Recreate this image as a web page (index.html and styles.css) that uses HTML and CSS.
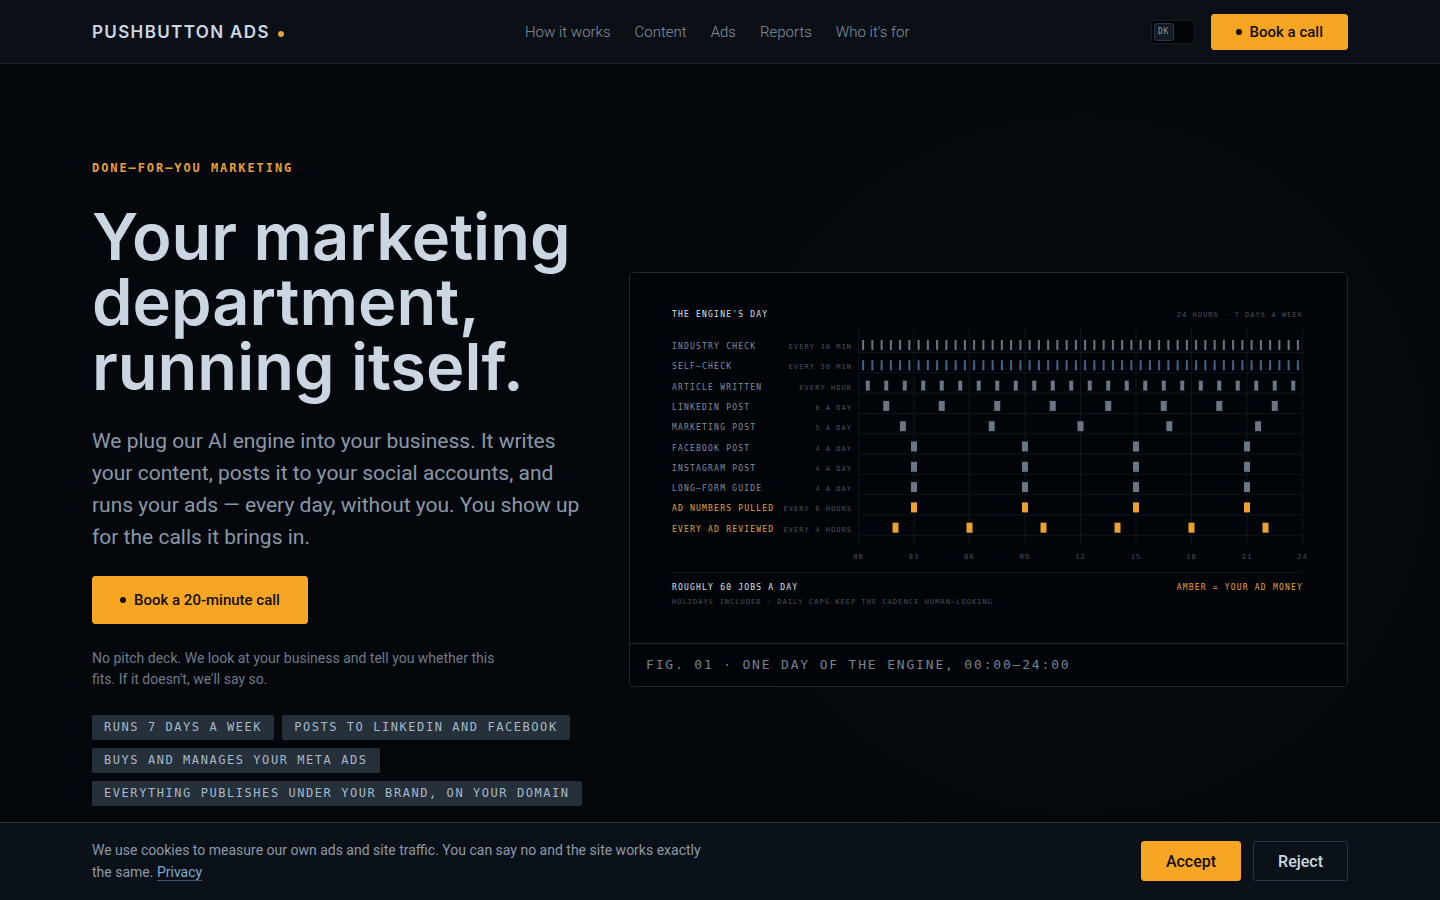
FILE: index.html
```
<!DOCTYPE html>
<html lang="en">
<head>
<meta charset="UTF-8">
<meta name="viewport" content="width=device-width, initial-scale=1.0">
<title>Pushbutton Ads</title>
<link rel="stylesheet" href="styles.css">
</head>
<body>

<header class="site-header">
    <div class="wrap header-inner">
        <a class="logo" href="#">PUSHBUTTON ADS<span class="logo-dot"></span></a>
        <nav class="nav">
            <a href="#how">How it works</a>
            <a href="#content">Content</a>
            <a href="#ads">Ads</a>
            <a href="#reports">Reports</a>
            <a href="#who">Who it's for</a>
        </nav>
        <div class="header-actions">
            <button class="theme-toggle" type="button" aria-label="Switch theme"><span>DK</span></button>
            <a class="btn btn-small" href="#call"><span class="dot"></span>Book a call</a>
        </div>
    </div>
</header>

<main class="hero">
    <div class="wrap hero-grid">
        <div class="hero-copy">
            <p class="eyebrow">DONE–FOR–YOU MARKETING</p>
            <h1>Your marketing department, running itself.</h1>
            <p class="lead">We plug our AI engine into your business. It writes your content, posts it to your social accounts, and runs your ads — every day, without you. You show up for the calls it brings in.</p>
            <a class="btn btn-large" href="#call"><span class="dot"></span>Book a 20-minute call</a>
            <p class="note">No pitch deck. We look at your business and tell you whether this fits. If it doesn't, we'll say so.</p>
            <ul class="chips">
                <li>RUNS 7 DAYS A WEEK</li>
                <li>POSTS TO LINKEDIN AND FACEBOOK</li>
                <li>BUYS AND MANAGES YOUR META ADS</li>
                <li>EVERYTHING PUBLISHES UNDER YOUR BRAND, ON YOUR DOMAIN</li>
            </ul>
        </div>

        <figure class="figure">
            <svg id="chart" class="chart" viewBox="0 0 717 370" role="img" aria-label="The engine's day">
                <text class="title" x="42" y="44">THE ENGINE'S DAY</text>
                <text class="sub end" x="673" y="44">24 HOURS · 7 DAYS A WEEK</text>
                <g id="grid"></g>
                <g id="rows"></g>
                <line class="rule" x1="42" y1="299.5" x2="672" y2="299.5"/>
                <text class="title" x="42" y="317">ROUGHLY 60 JOBS A DAY</text>
                <text class="sub" x="42" y="331">HOLIDAYS INCLUDED · DAILY CAPS KEEP THE CADENCE HUMAN–LOOKING</text>
                <text class="amber end" x="673" y="317">AMBER = YOUR AD MONEY</text>
            </svg>
            <figcaption>FIG. 01 · ONE DAY OF THE ENGINE, 00:00–24:00</figcaption>
        </figure>
    </div>
</main>

<section class="cookies" aria-label="Cookies">
    <div class="wrap cookies-inner">
        <p>We use cookies to measure our own ads and site traffic. You can say no and the site works exactly the same. <a href="#privacy">Privacy</a></p>
        <div class="cookie-actions">
            <button class="btn" type="button">Accept</button>
            <button class="btn btn-outline" type="button">Reject</button>
        </div>
    </div>
</section>

<script src="chart.js"></script>
</body>
</html>
```

FILE: styles.css
```
* {
    box-sizing: border-box;
}
body {
    margin: 0;
    min-height: 100vh;
    background: #04070b;
    color: #ccd6e2;
    font-family: Roboto, "Liberation Sans", sans-serif;
    font-size: 15px;
}
a {
    color: inherit;
    text-decoration: none;
}
.wrap {
    max-width: 1320px;
    margin: 0 auto;
    padding: 0 32px;
}

/* header */
.site-header {
    background: #0b1016;
    border-bottom: 1px solid #1b232d;
}
.header-inner {
    display: flex;
    align-items: center;
    justify-content: space-between;
    height: 63px;
}
.logo {
    display: flex;
    align-items: center;
    gap: 8px;
    font-family: Inter, sans-serif;
    font-size: 17px;
    font-weight: 600;
    letter-spacing: 0.08em;
}
.logo-dot {
    width: 6px;
    height: 6px;
    margin-top: 5px;
    border-radius: 50%;
    background: #e0a040;
}
.nav {
    display: flex;
    gap: 24px;
    color: #8792a0;
    font-weight: 300;
}
.header-actions {
    display: flex;
    align-items: center;
    gap: 16px;
}
.theme-toggle {
    width: 44px;
    height: 24px;
    padding: 2px;
    display: flex;
    background: #020407;
    border: 1px solid #151c24;
    border-radius: 2px;
}
.theme-toggle span {
    width: 20px;
    height: 18px;
    border: 1px solid #2b3642;
    border-radius: 2px;
    background: #141b23;
    color: #909ba8;
    font: 8px/15px "DejaVu Sans Mono", monospace;
    letter-spacing: 0.1em;
    text-align: center;
}
.btn {
    display: inline-flex;
    align-items: center;
    justify-content: center;
    height: 40px;
    padding: 0 24px;
    background: #f6a623;
    color: #140c02;
    border: 1px solid #f6a623;
    border-radius: 3px;
    font-family: inherit;
    font-size: 16px;
    font-weight: 500;
    cursor: pointer;
}
.btn-small {
    height: 36px;
    font-size: 15px;
}
.btn-large {
    height: 48px;
    padding: 0 27px;
    font-size: 15px;
}
.btn-outline {
    background: transparent;
    color: #ccd6e2;
    border-color: #2a333e;
}
.dot {
    width: 6px;
    height: 6px;
    margin-right: 8px;
    border-radius: 50%;
    background: #140c02;
}

/* hero */
.hero {
    background: radial-gradient(circle at 1080px 400px, #070b11 0, #04070b 420px);
}
.hero-grid {
    display: grid;
    grid-template-columns: 493fr 719fr;
    gap: 44px;
    align-items: center;
    padding-top: 88px;
    padding-bottom: 96px;
}
.eyebrow {
    margin: 0 0 20px;
    color: #e5a03a;
    font: bold 12px/32px "DejaVu Sans Mono", monospace;
    letter-spacing: 0.16em;
}
h1 {
    margin: 0 0 26px;
    font-family: Inter, "Liberation Sans", sans-serif;
    font-size: 65px;
    font-weight: 600;
    line-height: 65px;
}
.lead {
    margin: 0 0 23px;
    color: #8b98a8;
    font-size: 21px;
    line-height: 32px;
}
.note {
    max-width: 424px;
    margin: 24px 0 25px;
    color: #6f7b89;
    font-size: 14px;
    line-height: 21px;
}
.chips {
    display: flex;
    flex-wrap: wrap;
    gap: 8px;
    margin: 0;
    padding: 0;
    list-style: none;
}
.chips li {
    padding: 0 12px;
    background: #25303b;
    color: #a9b8c8;
    border-radius: 2px;
    font: 12px/25px "DejaVu Sans Mono", monospace;
    letter-spacing: 0.13em;
}

/* figure */
.figure {
    margin: 0;
    background: #010408;
    border: 1px solid #1e262f;
    border-radius: 5px;
}
.chart {
    display: block;
    width: 100%;
}
.chart text {
    font-family: "DejaVu Sans Mono", monospace;
    font-size: 8px;
    letter-spacing: 0.15em;
    fill: #828d9a;
}
.chart .title {
    fill: #dbe2ea;
}
.chart .sub {
    font-size: 7px;
    fill: #4a535e;
}
.chart .amber {
    fill: #e5a03a;
}
.chart .end {
    text-anchor: end;
}
.chart .middle {
    text-anchor: middle;
}
.chart .rule {
    stroke: #10161d;
}
.chart .tick {
    fill: #6b7684;
}
.chart .tick.blue {
    fill: #46648a;
}
.chart .tick.ad {
    fill: #eda22e;
}
figcaption {
    padding: 0 16px;
    border-top: 1px solid #1e262f;
    color: #77828f;
    font: 13px/42px "DejaVu Sans Mono", monospace;
    letter-spacing: 0.14em;
}

/* cookie bar */
.cookies {
    position: fixed;
    left: 0;
    right: 0;
    bottom: 0;
    background: #0b1118;
    border-top: 1px solid #26323e;
}
.cookies-inner {
    display: flex;
    align-items: center;
    justify-content: space-between;
    padding-top: 16px;
    padding-bottom: 17px;
}
.cookies p {
    max-width: 624px;
    margin: 0;
    color: #8d99a7;
    font-size: 14px;
    line-height: 22px;
}
.cookies p a {
    color: #7fa8d4;
    border-bottom: 1px solid #3c5672;
}
.cookie-actions {
    display: flex;
    gap: 12px;
}
```

FILE: chart.js
```
// label, how often, runs per day, tick width, tick colour
var rows = [
    ['INDUSTRY CHECK', 'EVERY 30 MIN', 48, 2, ''],
    ['SELF–CHECK', 'EVERY 30 MIN', 48, 2, 'blue'],
    ['ARTICLE WRITTEN', 'EVERY HOUR', 24, 4, ''],
    ['LINKEDIN POST', '8 A DAY', 8, 6, ''],
    ['MARKETING POST', '5 A DAY', 5, 6, ''],
    ['FACEBOOK POST', '4 A DAY', 4, 6, ''],
    ['INSTAGRAM POST', '4 A DAY', 4, 6, ''],
    ['LONG–FORM GUIDE', '4 A DAY', 4, 6, ''],
    ['AD NUMBERS PULLED', 'EVERY 6 HOURS', 4, 6, 'ad'],
    ['EVERY AD REVIEWED', 'EVERY 4 HOURS', 6, 6, 'ad']
];
var left = 228.5;
var width = 444;
var rowTop = 67;
var rowStep = 20.3;

var grid = '';
for (var h = 0; h <= 24; h += 3) {
    var x = left + h * width / 24;
    grid += '<line class="rule" x1="' + x + '" y1="56" x2="' + x + '" y2="272"/>';
    grid += '<text class="sub middle" x="' + x + '" y="286">' + String(h).padStart(2, '0') + '</text>';
}
document.getElementById('grid').innerHTML = grid;

document.getElementById('rows').innerHTML = rows.map(function(row, i) {
    var y = rowTop + i * rowStep;
    var out = '<text class="' + (row[4] === 'ad' ? 'amber' : '') + '" x="42" y="' + (y + 9) + '">' + row[0] + '</text>' +
        '<text class="sub end" x="222" y="' + (y + 9) + '">' + row[1] + '</text>' +
        '<line class="rule" x1="' + left + '" y1="' + (y + 12.5) + '" x2="' + (left + width) + '" y2="' + (y + 12.5) + '"/>';
    for (var n = 0; n < row[2]; n++) {
        var cx = left + (n + 0.5) * width / row[2];
        out += '<rect class="tick ' + row[4] + '" x="' + (cx - row[3] / 2) + '" y="' + y + '" width="' + row[3] + '" height="10"/>';
    }
    return out;
}).join('');
```
